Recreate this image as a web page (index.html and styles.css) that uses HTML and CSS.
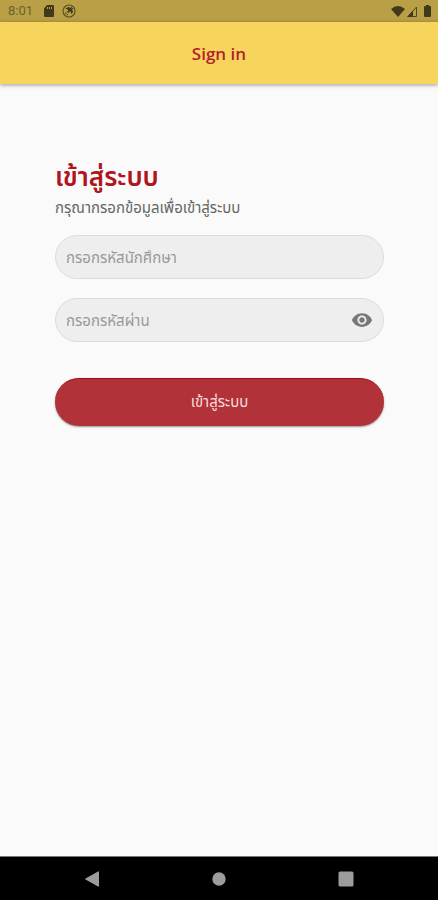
FILE: index.html
```html
<!DOCTYPE html>
<html lang="th">
<head>
<meta charset="utf-8">
<meta name="viewport" content="width=device-width, initial-scale=1">
<title>Sign in</title>
<link rel="stylesheet" href="styles.css">
</head>
<body>
<div class="status">
  <span class="clock">8:01</span>
  <svg class="sd" width="10" height="12" viewBox="0 0 10 12" aria-hidden="true"><path fill="#40391b" fill-rule="evenodd" d="M3 0h6a1 1 0 0 1 1 1v10a1 1 0 0 1-1 1H1a1 1 0 0 1-1-1V3.500zM3 2v2h1V2zM5 2v2h1V2zM7 2v2h1V2z"/></svg>
  <svg class="sync" width="14" height="14" viewBox="0 0 14 14" aria-hidden="true"><circle cx="7" cy="7" r="6" fill="none" stroke="#5a5024" stroke-width="1.200"/><path d="M3.500 4.500L6.500 3l3.500 1.500 1 3.500-2 2-.5-3L6 9l-1-1 1.500-2z" fill="#40391b"/><path d="M3 8.500l3 2.500M9 3l2 2" stroke="#4d451f"/></svg>
  <span class="signals">
    <svg width="14" height="11" viewBox="0 0 14 11" aria-hidden="true"><path fill="#40391b" d="M0 3Q7-3 14 3L7 11z"/></svg>
    <svg width="10" height="11" viewBox="0 0 10 11" aria-hidden="true"><path fill="none" stroke="#51481f" d="M1 10.500L9.500 1v9.500z"/><path fill="#40391b" d="M0 11l6-6.500V11z"/></svg>
    <svg class="battery" width="7" height="12" viewBox="0 0 7 12" aria-hidden="true"><path fill="#40391b" d="M2 0h3v1h1a1 1 0 0 1 1 1v9a1 1 0 0 1-1 1H1a1 1 0 0 1-1-1V2a1 1 0 0 1 1-1h1z"/></svg>
  </span>
</div>
<header class="appbar">Sign in</header>
<main class="content">
  <h1 class="title">เข้าสู่ระบบ</h1>
  <p class="subtitle">กรุณากรอกข้อมูลเพื่อเข้าสู่ระบบ</p>
  <form class="form">
    <div class="field">
      <input class="input" type="text" aria-label="กรอกรหัสนักศึกษา" placeholder="กรอกรหัสนักศึกษา">
    </div>
    <div class="field">
      <input class="input" type="password" aria-label="กรอกรหัสผ่าน" placeholder="กรอกรหัสผ่าน">
      <button class="reveal" type="button" aria-label="แสดงรหัสผ่าน">
        <svg width="22" height="22" viewBox="0 0 24 24" aria-hidden="true"><path fill="#777" d="M12 4.500C7 4.500 2.730 7.610 1 12c1.730 4.390 6 7.500 11 7.500s9.270-3.110 11-7.500c-1.730-4.390-6-7.500-11-7.500zM12 17c-2.760 0-5-2.240-5-5s2.240-5 5-5 5 2.240 5 5-2.240 5-5 5zm0-8c-1.660 0-3 1.340-3 3s1.340 3 3 3 3-1.340 3-3-1.340-3-3-3z"/></svg>
      </button>
    </div>
    <button class="submit" type="submit">เข้าสู่ระบบ</button>
  </form>
</main>
<nav class="navbar">
  <button class="key" type="button" aria-label="Back"><svg width="16" height="16" viewBox="0 0 16 16"><path fill="#9c9c9c" d="M14 .5q1-.5 1 .5v14q0 1-1 .5L1.500 8.500q-1-.5 0-1z"/></svg></button>
  <button class="key" type="button" aria-label="Home"><svg width="16" height="16" viewBox="0 0 16 16"><circle cx="8" cy="8" r="6.700" fill="#9c9c9c"/></svg></button>
  <button class="key" type="button" aria-label="Recent apps"><svg width="16" height="16" viewBox="0 0 16 16"><rect x=".5" y=".5" width="15" height="15" rx="1.500" fill="#9c9c9c"/></svg></button>
</nav>
</body>
</html>
```
FILE: styles.css
```css
* {
  box-sizing: border-box;
}

body {
  margin: 0;
  min-height: 100vh;
  display: flex;
  flex-direction: column;
  background: #fafafa;
  font-family: "Open Sans", "Noto Sans Thai", "Noto Sans", sans-serif;
}

button {
  border: 0;
  padding: 0;
  background: none;
  font: inherit;
}

.status {
  display: flex;
  align-items: center;
  height: 22px;
  padding: 0 7px 0 8px;
  background: #b9a047;
}

.clock {
  font: 13px/22px Roboto, sans-serif;
  color: #6c602e;
}

.sd {
  margin-left: 11px;
}

.sync {
  margin-left: 8px;
}

.signals {
  display: flex;
  align-items: center;
  gap: 2px;
  margin-left: auto;
}

.battery {
  margin-left: 5px;
}

.appbar {
  height: 62px;
  background: #f7d55d;
  color: #b2202c;
  box-shadow: 0 1px 4px rgba(0, 0, 0, 0.4);
  font-size: 17px;
  font-weight: 600;
  line-height: 64px;
  text-align: center;
}

.content {
  flex: 1;
  padding: 74px 54px 0 55px;
}

.title {
  margin: 0;
  color: #b0141c;
  font-size: 26px;
  font-weight: 600;
  line-height: 36px;
}

.subtitle {
  margin: 0;
  color: #666;
  font-size: 15px;
  line-height: 26px;
}

.form {
  display: flex;
  flex-direction: column;
  gap: 19px;
  margin-top: 15px;
}

.field {
  display: flex;
  align-items: center;
  height: 44px;
  padding: 0 10px;
  border: 1px solid #dcdcdc;
  border-radius: 24px;
  background: #eee;
}

.input {
  flex: 1;
  min-width: 0;
  height: 38px;
  padding: 0;
  border: 0;
  outline: 0;
  background: none;
  color: #444;
  font: inherit;
  font-size: 15px;
}

.input::placeholder {
  color: #999;
  opacity: 1;
}

.reveal {
  display: flex;
}

.submit {
  height: 48px;
  margin-top: 17px;
  border-top: 1px solid #a30d17;
  border-radius: 24px;
  background: #b23239;
  color: #f6dcdd;
  box-shadow: 0 1px 2px rgba(0, 0, 0, 0.4);
  font-size: 15px;
}

.navbar {
  display: flex;
  justify-content: center;
  gap: 111px;
  height: 44px;
  border-top: 1px solid #777;
  background: #000;
}

.key {
  display: flex;
  align-items: center;
}
```
